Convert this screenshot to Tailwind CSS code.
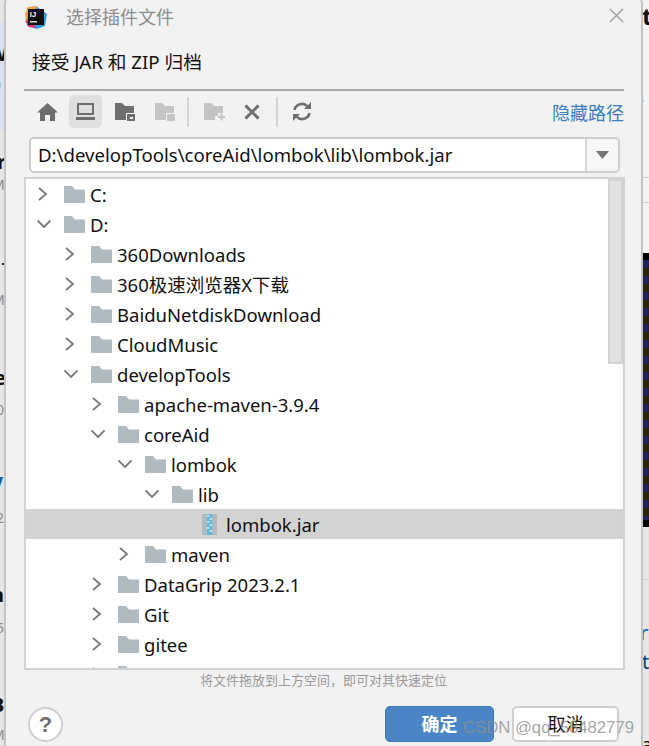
<!DOCTYPE html>
<html lang="zh">
<head>
<meta charset="UTF-8">
<title>选择插件文件</title>
<script src="https://cdn.jsdelivr.net/npm/@tailwindcss/browser@4"></script>
</head>
<body class="w-[649px] h-[746px] overflow-hidden bg-white relative font-['Noto_Sans','Noto_Sans_CJK_SC',sans-serif]">
<svg class="hidden">
  <symbol id="folder" viewBox="0 0 21 17"><path d="M0 0h8l3 3.500h10V17H0z" fill="#afbac1"/></symbol>
  <symbol id="right" viewBox="0 0 12 14"><path d="M2 1 9 7l-7 6" fill="none" stroke="#7a7a7a" stroke-width="1.800"/></symbol>
  <symbol id="down" viewBox="0 0 14 12"><path d="M.5 2.500 7 9l6.500-6.500" fill="none" stroke="#7a7a7a" stroke-width="1.800"/></symbol>
</svg>

<!-- page behind the dialog, only the edges show -->
<div class="absolute left-0 top-0 w-[6px] h-[746px] bg-[#e6e6e6]">
  <div class="absolute left-0 top-[22px] w-[6px] h-[108px] bg-[#d9e2ee]"></div>
</div>
<div class="absolute right-0 top-0 w-[8px] h-[746px] bg-[#f4f4f4]">
  <div class="absolute left-0 top-[177px] w-[8px] h-[1px] bg-[#cfcfcf]"></div>
  <div class="absolute left-0 top-[202px] w-[8px] h-[1px] bg-[#cfcfcf]"></div>
  <div class="absolute left-0 top-[253px] w-[8px] h-[274px] bg-[repeating-linear-gradient(180deg,#20245a_0px,#20245a_8px,#26240c_8px,#26240c_16px)] border-y-[7px] border-black"></div>
  <div class="absolute left-0 top-[527px] w-[8px] h-[219px] bg-[#e6e6e6]"></div>
  <div class="absolute left-0 top-[579px] w-[8px] h-[1px] bg-[#cfcfcf]"></div>
</div>
<div class="absolute left-[-12px] top-[42px] text-[20px] leading-[24px] font-bold text-[#111]">W</div>
<div class="absolute left-[-7px] top-[76px] text-[14px] leading-[18px] text-[#888]">0</div>
<div class="absolute left-[-3px] top-[150px] text-[20px] leading-[24px] font-bold text-[#111]">r</div>
<div class="absolute left-[-8px] top-[176px] text-[14px] leading-[18px] text-[#888]">M</div>
<div class="absolute left-[2px] top-[263px] w-[4px] h-[2px] bg-[#222]"></div>
<div class="absolute left-[-8px] top-[291px] text-[14px] leading-[18px] text-[#888]">M</div>
<div class="absolute left-[-6px] top-[366px] text-[20px] leading-[24px] font-bold text-[#111]">e</div>
<div class="absolute left-[-4px] top-[401px] text-[14px] leading-[18px] text-[#888]">0</div>
<div class="absolute left-[-10px] top-[472px] text-[20px] leading-[24px] font-bold text-[#0b5fb0]">Vi</div>
<div class="absolute left-[-4px] top-[509px] text-[14px] leading-[18px] text-[#888]">2</div>
<div class="absolute left-[-9px] top-[583px] text-[20px] leading-[24px] font-bold text-[#111]">n</div>
<div class="absolute left-[-4px] top-[619px] text-[14px] leading-[18px] text-[#888]">5</div>
<div class="absolute left-[-9px] top-[693px] text-[20px] leading-[24px] font-bold text-[#111]">B</div>
<div class="absolute left-[-8px] top-[726px] text-[14px] leading-[18px] text-[#888]">M</div>
<div class="absolute left-[642px] top-[2px] text-[24px] leading-[28px] font-bold text-[#111]">t</div>
<div class="absolute left-[636px] top-[90px] text-[14px] leading-[18px] text-[#333]">3</div>
<div class="absolute left-[640px] top-[621px] text-[20px] leading-[24px] text-[#0b5fb0]">rf</div>
<div class="absolute left-[642px] top-[650px] text-[20px] leading-[24px] text-[#0b3f70]">t</div>
<div class="absolute left-[642px] top-[733px] text-[18px] leading-[22px] text-[#111]">a</div>

<!-- dialog -->
<div class="absolute left-[4px] top-[-6px] w-[639px] h-[760px] bg-[#f2f2f2] rounded-[10px] border-x-2 border-[#c4c4c4] flex flex-col">
  <div class="h-[34px] mt-[6px] flex items-center pl-[18px] pr-[17px] shrink-0">
    <svg class="w-[24px] h-[24px]" viewBox="0 0 24 24">
      <path d="M3 3 12 1l11 8-2 12-8 3-10-3z" fill="#2a9ee8"/>
      <path d="M1 9 4 2l9-1-6 16-5-1z" fill="#f8a13a"/>
      <path d="M1 16 7 12 12 23l-7-1z" fill="#ec2f78"/>
      <rect x="4" y="4" width="16" height="16" fill="#111"/>
      <rect x="6" y="16" width="7" height="1.500" fill="#ddd"/>
      <text x="5.800" y="12" fill="#fff" font-size="7.500" font-weight="700" font-family="Liberation Sans">IJ</text>
    </svg>
    <span class="ml-[18px] text-[18px] text-[#8c8c8c]">选择插件文件</span>
    <svg class="ml-auto mt-[-4px] w-[15px] h-[15px]" viewBox="0 0 16 16"><path d="M1 1l14 14M15 1 1 15" stroke="#a0a0a0" stroke-width="1.400"/></svg>
  </div>
  <div class="h-[55px] pl-[26px] pt-[2px] flex items-center shrink-0 text-[18.7px] text-[#111]">接受 JAR 和 ZIP 归档</div>
  <div class="h-[2px] ml-[18px] mr-[17px] bg-[#a8a8a8] shrink-0"></div>

  <!-- toolbar -->
  <div class="h-[41px] ml-[18px] mr-[17px] flex items-center shrink-0">
    <div class="w-[34px] flex justify-center ml-[6px]"><svg class="w-[21px] h-[18px]" viewBox="0 0 21 18"><path d="M10.500 0 21 9.500h-3V18h-5v-6H8v6H3V9.500H0z" fill="#6e6e6e"/></svg></div>
    <div class="w-[33px] h-[33px] rounded-[5px] bg-[#dfdfdf] flex items-center justify-center ml-[5px]"><svg class="w-[19px] h-[17px]" viewBox="0 0 19 17"><path d="M2 1h15v10H2z" fill="none" stroke="#6e6e6e" stroke-width="2"/><rect y="14" width="19" height="3" fill="#6e6e6e"/></svg></div>
    <div class="w-[34px] flex justify-center ml-[6px]"><svg class="w-[20px] h-[18px]" viewBox="0 0 20 18"><path d="M0 0h7l3 3h9v7h-8v7H0z" fill="#6e6e6e"/><rect x="12" y="11" width="8" height="7" fill="#6e6e6e"/><rect x="15" y="14" width="3" height="2" fill="#f2f2f2"/></svg></div>
    <div class="w-[34px] flex justify-center ml-[6px]"><svg class="w-[20px] h-[18px]" viewBox="0 0 20 18"><path d="M0 0h7l3 3h9v7h-8v7H0z" fill="#c4c4c4"/><rect x="12" y="11" width="8" height="7" fill="#c4c4c4"/></svg></div>
    <div class="w-[2px] h-[30px] bg-[#d4d4d4] ml-[5px]"></div>
    <div class="w-[34px] flex justify-center ml-[8px]"><svg class="w-[21px] h-[18px]" viewBox="0 0 21 18"><path d="M0 0h7l3 3h9v7h-5v3h-3v4H0z" fill="#c4c4c4"/><path d="M14 14h7M17.500 10.500v7" stroke="#c4c4c4" stroke-width="2"/></svg></div>
    <div class="w-[34px] flex justify-center ml-[4px]"><svg class="w-[16px] h-[16px]" viewBox="0 0 16 16"><path d="M1.500 1.500l13 13M14.500 1.500l-13 13" stroke="#6e6e6e" stroke-width="3"/></svg></div>
    <div class="w-[2px] h-[30px] bg-[#d4d4d4] ml-[7px]"></div>
    <div class="w-[34px] flex justify-center ml-[7px]"><svg class="w-[20px] h-[19px]" viewBox="0 0 20 19"><path d="M2.500 8A7.500 7.500 0 0 1 15.500 4.500" fill="none" stroke="#6e6e6e" stroke-width="2.600"/><path d="M12 7h7V0z" fill="#6e6e6e"/><path d="M17.500 11A7.500 7.500 0 0 1 4.500 14.500" fill="none" stroke="#6e6e6e" stroke-width="2.600"/><path d="M8 12H1v7z" fill="#6e6e6e"/></svg></div>
    <a class="ml-auto mt-[4px] text-[18px] text-[#3b7fc0]">隐藏路径</a>
  </div>

  <!-- path -->
  <div class="h-[36px] mt-[5px] ml-[23px] mr-[21px] flex bg-white border-2 border-[#cdcdcd] rounded-[5px] shrink-0">
    <div class="flex-1 pl-[7px] text-[18.6px] leading-[32px] text-[#111] overflow-hidden whitespace-nowrap">D:\developTools\coreAid\lombok\lib\lombok.jar</div>
    <div class="w-[33px] border-l-2 border-[#d4d4d4] bg-[#f7f7f7] rounded-r-[4px] flex items-center justify-center"><svg class="w-[13px] h-[8px]" viewBox="0 0 13 8"><path d="M0 0h13L6.500 8z" fill="#757575"/></svg></div>
  </div>

  <!-- tree -->
  <div class="relative h-[493px] mt-[4px] ml-[18px] mr-[16px] bg-white border-2 border-[#d2d2d2] overflow-hidden shrink-0 text-[18.5px] text-[#111]">
    <div class="absolute right-0 top-0 w-[15px] h-[185px] bg-[#e2e2e2] border-2 border-[#d4d4d4]"></div>
    <div class="h-[30px] flex items-center pl-[11px]"><svg class="w-[12px] h-[14px]"><use href="#right"/></svg><svg class="w-[21px] h-[17px] ml-[15px]"><use href="#folder"/></svg><span class="ml-[5px] mt-[2px]">C:</span></div>
    <div class="h-[30px] flex items-center pl-[11px]"><svg class="w-[14px] h-[12px]"><use href="#down"/></svg><svg class="w-[21px] h-[17px] ml-[13px]"><use href="#folder"/></svg><span class="ml-[5px] mt-[2px]">D:</span></div>
    <div class="h-[30px] flex items-center pl-[38px]"><svg class="w-[12px] h-[14px]"><use href="#right"/></svg><svg class="w-[21px] h-[17px] ml-[15px]"><use href="#folder"/></svg><span class="ml-[5px] mt-[2px]">360Downloads</span></div>
    <div class="h-[30px] flex items-center pl-[38px]"><svg class="w-[12px] h-[14px]"><use href="#right"/></svg><svg class="w-[21px] h-[17px] ml-[15px]"><use href="#folder"/></svg><span class="ml-[5px] mt-[2px]">360极速浏览器X下载</span></div>
    <div class="h-[30px] flex items-center pl-[38px]"><svg class="w-[12px] h-[14px]"><use href="#right"/></svg><svg class="w-[21px] h-[17px] ml-[15px]"><use href="#folder"/></svg><span class="ml-[5px] mt-[2px]">BaiduNetdiskDownload</span></div>
    <div class="h-[30px] flex items-center pl-[38px]"><svg class="w-[12px] h-[14px]"><use href="#right"/></svg><svg class="w-[21px] h-[17px] ml-[15px]"><use href="#folder"/></svg><span class="ml-[5px] mt-[2px]">CloudMusic</span></div>
    <div class="h-[30px] flex items-center pl-[38px]"><svg class="w-[14px] h-[12px]"><use href="#down"/></svg><svg class="w-[21px] h-[17px] ml-[13px]"><use href="#folder"/></svg><span class="ml-[5px] mt-[2px]">developTools</span></div>
    <div class="h-[30px] flex items-center pl-[65px]"><svg class="w-[12px] h-[14px]"><use href="#right"/></svg><svg class="w-[21px] h-[17px] ml-[15px]"><use href="#folder"/></svg><span class="ml-[5px] mt-[2px]">apache-maven-3.9.4</span></div>
    <div class="h-[30px] flex items-center pl-[65px]"><svg class="w-[14px] h-[12px]"><use href="#down"/></svg><svg class="w-[21px] h-[17px] ml-[13px]"><use href="#folder"/></svg><span class="ml-[5px] mt-[2px]">coreAid</span></div>
    <div class="h-[30px] flex items-center pl-[92px]"><svg class="w-[14px] h-[12px]"><use href="#down"/></svg><svg class="w-[21px] h-[17px] ml-[13px]"><use href="#folder"/></svg><span class="ml-[5px] mt-[2px]">lombok</span></div>
    <div class="h-[30px] flex items-center pl-[119px]"><svg class="w-[14px] h-[12px]"><use href="#down"/></svg><svg class="w-[21px] h-[17px] ml-[13px]"><use href="#folder"/></svg><span class="ml-[5px] mt-[2px]">lib</span></div>
    <div class="h-[30px] flex items-center pl-[176px] bg-[#d3d3d3]"><svg class="w-[15px] h-[21px]" viewBox="0 0 15 21"><rect width="15" height="21" fill="#afbac1"/><rect x="5" width="5" height="21" fill="#5bb6e0"/><path d="M5 2h2.500M7.500 5H10M5 8h2.500M7.500 11H10M5 14h2.500M7.500 17H10" stroke="#d8eef8" stroke-width="1.500"/></svg><span class="ml-[9px] mt-[2px]">lombok.jar</span></div>
    <div class="h-[30px] flex items-center pl-[92px]"><svg class="w-[12px] h-[14px]"><use href="#right"/></svg><svg class="w-[21px] h-[17px] ml-[15px]"><use href="#folder"/></svg><span class="ml-[5px] mt-[2px]">maven</span></div>
    <div class="h-[30px] flex items-center pl-[65px]"><svg class="w-[12px] h-[14px]"><use href="#right"/></svg><svg class="w-[21px] h-[17px] ml-[15px]"><use href="#folder"/></svg><span class="ml-[5px] mt-[2px]">DataGrip 2023.2.1</span></div>
    <div class="h-[30px] flex items-center pl-[65px]"><svg class="w-[12px] h-[14px]"><use href="#right"/></svg><svg class="w-[21px] h-[17px] ml-[15px]"><use href="#folder"/></svg><span class="ml-[5px] mt-[2px]">Git</span></div>
    <div class="h-[30px] flex items-center pl-[65px]"><svg class="w-[12px] h-[14px]"><use href="#right"/></svg><svg class="w-[21px] h-[17px] ml-[15px]"><use href="#folder"/></svg><span class="ml-[5px] mt-[2px]">gitee</span></div>
    <div class="h-[30px] flex items-center pl-[65px]"><svg class="w-[12px] h-[14px]"><use href="#right"/></svg><svg class="w-[21px] h-[17px] ml-[15px]"><use href="#folder"/></svg></div>
  </div>

  <div class="text-center text-[13px] leading-[20px] text-[#9a9a9a] shrink-0">将文件拖放到上方空间，即可对其快速定位</div>

  <!-- footer -->
  <div class="flex items-center pl-[22px] pr-[22px] mt-[16px] shrink-0">
    <div class="w-[35px] h-[35px] rounded-full bg-white border-2 border-[#cfcfcf] flex items-center justify-center text-[22px] font-bold text-[#6e6e6e] font-['Liberation_Sans',sans-serif]">?</div>
    <div class="ml-auto w-[109px] h-[36px] rounded-[5px] bg-[#4a86c5] border border-[#3f78b5] flex items-center justify-center text-[18px] font-bold text-white">确定</div>
    <div class="ml-[18px] w-[107px] h-[36px] rounded-[5px] bg-white border-2 border-[#cfcfcf] flex items-center justify-center text-[18px] text-[#111]">取消</div>
  </div>
</div>

<!-- watermark -->
<div class="absolute left-[463px] top-[717px] text-[16.7px] leading-[22px] text-[#8f8f8f]/80 font-['Liberation_Sans',sans-serif] whitespace-nowrap">CSDN @qq_58482779</div>
</body>
</html>
